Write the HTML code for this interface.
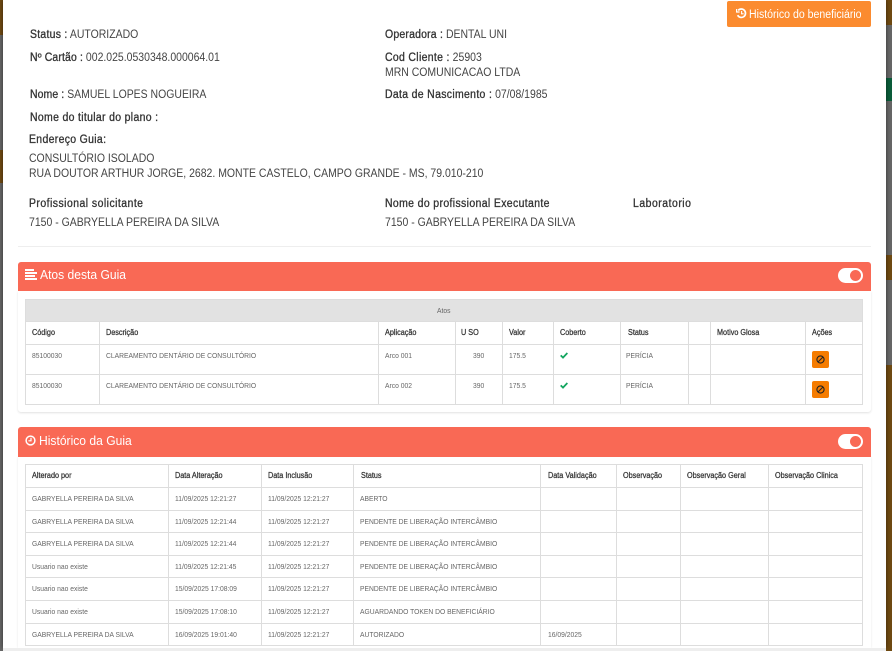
<!DOCTYPE html>
<html lang="pt-BR"><head><meta charset="utf-8"><title>Guia</title>
<style>
html,body{margin:0;padding:0;width:892px;height:651px;overflow:hidden;background:#666;font-family:"Liberation Sans",Arial,sans-serif}
#p{position:relative;width:892px;height:651px;overflow:hidden}
#p div,#p span,#p svg{position:absolute}
.b{background:#6f4a12}
#m{left:3px;top:0;width:883px;height:648px;background:#fff;box-shadow:0 0 4px rgba(0,0,0,.5)}
.t{font-size:11.5px;line-height:14px;color:#444;white-space:nowrap;transform:translateY(1px) scaleX(.91);transform-origin:0 50%}
.t b{font-weight:400;color:#333;-webkit-text-stroke:.3px #333;letter-spacing:.36px}
.c{font-size:7.5px;line-height:10px;color:#666;white-space:nowrap;transform:scaleX(.9);transform-origin:0 50%}
.h{font-size:7.8px;line-height:10px;color:#333;white-space:nowrap;-webkit-text-stroke:.25px #333;transform:scaleX(.93);transform-origin:0 50%}
.l{background:#ddd}
.hd{background:#f96955;left:18px;width:853px;border-radius:3px 3px 0 0}
.ti{color:#fff;font-size:12.6px;line-height:16px;white-space:nowrap;transform:scaleX(.96);transform-origin:0 50%}
.sw{width:25px;height:15px;border-radius:8px;background:#fff}
.sw i{position:absolute;right:2px;top:2px;width:11px;height:11px;border-radius:50%;background:#f96955;display:block}
.ab{width:17px;height:17px;left:812px;background:#f57c00;border-radius:2px}
</style></head><body><div id="p">
<div class="b" style="left:0;top:0;width:3px;height:35px"></div>
<div class="b" style="left:0;top:150px;width:3px;height:33px"></div>
<div class="b" style="left:886px;top:0;width:6px;height:25px"></div>
<div style="left:886px;top:78px;width:6px;height:23px;background:#0b5c3a"></div>
<div class="b" style="left:886px;top:255px;width:6px;height:25px"></div>
<div class="b" style="left:886px;top:365px;width:6px;height:286px"></div>
<div id="m"></div>

<div style="left:727px;top:1px;width:144px;height:26px;background:#fb8b2f;border-radius:2px"></div>
<svg style="left:736px;top:8px" width="11" height="11" viewBox="0 0 11 11" fill="none" stroke="#fff" stroke-width="1.7"><path d="M2.2 2.4A4.2 4.2 0 1 1 1.6 7.2"/><path d="M.6 1v3h3" stroke-width="1.2"/><path d="M5.6 3v2.8h2" stroke-width="1.1"/></svg>
<span class="t" style="left:749px;top:7px;color:#fff;transform:translateY(1px) scaleX(.917)">Histórico do beneficiário</span>

<span class="t" style="left:30px;top:27px"><b style="letter-spacing:.28px">Status :</b> AUTORIZADO</span>
<span class="t" style="left:385px;top:27px"><b style="letter-spacing:.22px">Operadora :</b> DENTAL UNI</span>
<span class="t" style="left:30px;top:50px"><b style="letter-spacing:.15px">Nº Cartão :</b> 002.025.0530348.000064.01</span>
<span class="t" style="left:385px;top:50px"><b>Cod Cliente :</b> 25903</span>
<span class="t" style="left:385px;top:65px">MRN COMUNICACAO LTDA</span>
<span class="t" style="left:30px;top:87px"><b style="letter-spacing:.1px">Nome :</b> SAMUEL LOPES NOGUEIRA</span>
<span class="t" style="left:385px;top:87px"><b>Data de Nascimento :</b> 07/08/1985</span>
<span class="t" style="left:30px;top:110px"><b>Nome do titular do plano :</b></span>
<span class="t" style="left:29px;top:132px"><b>Endereço Guia:</b></span>
<span class="t" style="left:29px;top:151px">CONSULTÓRIO ISOLADO</span>
<span class="t" style="left:29px;top:166px">RUA DOUTOR ARTHUR JORGE, 2682. MONTE CASTELO, CAMPO GRANDE - MS, 79.010-210</span>
<span class="t" style="left:29px;top:196px"><b style="letter-spacing:.5px">Profissional solicitante</b></span>
<span class="t" style="left:385px;top:196px"><b style="letter-spacing:.4px">Nome do profissional Executante</b></span>
<span class="t" style="left:633px;top:196px"><b style="letter-spacing:.55px">Laboratorio</b></span>
<span class="t" style="left:29px;top:215px">7150 - GABRYELLA PEREIRA DA SILVA</span>
<span class="t" style="left:385px;top:215px">7150 - GABRYELLA PEREIRA DA SILVA</span>
<div style="left:18px;top:246px;width:853px;height:1px;background:#eee"></div>

<!-- Atos card -->
<div style="left:18px;top:291px;width:853px;height:121px;box-shadow:0 1px 2px rgba(0,0,0,.12);border-radius:0 0 3px 3px"></div>
<div class="hd" style="top:262px;height:29px"></div>
<svg style="left:25px;top:269px" width="12" height="11" viewBox="0 0 12 11" fill="#fff"><rect x="0" y="0" width="9" height="2"/><rect x="0" y="3" width="12" height="2"/><rect x="0" y="6" width="10" height="2"/><rect x="0" y="9" width="12" height="2"/></svg>
<span class="ti" style="left:40px;top:267px">Atos desta Guia</span>
<div class="sw" style="left:838px;top:268px"><i></i></div>

<div style="left:25px;top:299px;width:838px;height:23px;background:#e2e2e2"></div>
<span class="c" style="left:437px;top:306px">Atos</span>
<div class="l" style="left:25px;top:299px;width:838px;height:1px"></div>
<div class="l" style="left:25px;top:321px;width:838px;height:1px"></div>
<div class="l" style="left:25px;top:344px;width:838px;height:1px"></div>
<div class="l" style="left:25px;top:374px;width:838px;height:1px"></div>
<div class="l" style="left:25px;top:404px;width:838px;height:1px"></div>
<div class="l" style="left:25px;top:299px;width:1px;height:106px"></div>
<div class="l" style="left:862px;top:299px;width:1px;height:106px"></div>
<div class="l" style="left:99px;top:322px;width:1px;height:83px"></div>
<div class="l" style="left:378px;top:322px;width:1px;height:83px"></div>
<div class="l" style="left:455px;top:322px;width:1px;height:83px"></div>
<div class="l" style="left:502px;top:322px;width:1px;height:83px"></div>
<div class="l" style="left:553px;top:322px;width:1px;height:83px"></div>
<div class="l" style="left:620px;top:322px;width:1px;height:83px"></div>
<div class="l" style="left:688px;top:322px;width:1px;height:83px"></div>
<div class="l" style="left:710px;top:322px;width:1px;height:83px"></div>
<div class="l" style="left:805px;top:322px;width:1px;height:83px"></div>

<span class="h" style="left:32px;top:328px">Código</span>
<span class="h" style="left:106px;top:328px">Descrição</span>
<span class="h" style="left:385px;top:328px">Aplicação</span>
<span class="h" style="left:461px;top:328px">U SO</span>
<span class="h" style="left:509px;top:328px">Valor</span>
<span class="h" style="left:560px;top:328px">Coberto</span>
<span class="h" style="left:628px;top:328px">Status</span>
<span class="h" style="left:717px;top:328px">Motivo Glosa</span>
<span class="h" style="left:812px;top:328px">Ações</span>

<span class="c" style="left:32px;top:351px">85100030</span>
<span class="c" style="left:106px;top:351px">CLAREAMENTO DENTÁRIO DE CONSULTÓRIO</span>
<span class="c" style="left:385px;top:351px">Arco 001</span>
<span class="c" style="left:473px;top:351px">390</span>
<span class="c" style="left:509px;top:351px">175.5</span>
<svg style="left:560px;top:352px" width="8" height="7" viewBox="0 0 8 7" fill="none" stroke="#12a55f" stroke-width="1.8"><path d="M.7 3.4L3 5.6 7.4 1"/></svg>
<span class="c" style="left:626px;top:351px">PERÍCIA</span>
<div class="ab" style="top:351px"></div>
<svg style="left:816px;top:355px" width="9" height="9" viewBox="0 0 9 9" fill="none" stroke="#222" stroke-width="1.1"><circle cx="4.5" cy="4.5" r="3.6"/><path d="M2 7L7 2"/></svg>

<span class="c" style="left:32px;top:381px">85100030</span>
<span class="c" style="left:106px;top:381px">CLAREAMENTO DENTÁRIO DE CONSULTÓRIO</span>
<span class="c" style="left:385px;top:381px">Arco 002</span>
<span class="c" style="left:473px;top:381px">390</span>
<span class="c" style="left:509px;top:381px">175.5</span>
<svg style="left:560px;top:382px" width="8" height="7" viewBox="0 0 8 7" fill="none" stroke="#12a55f" stroke-width="1.8"><path d="M.7 3.4L3 5.6 7.4 1"/></svg>
<span class="c" style="left:626px;top:381px">PERÍCIA</span>
<div class="ab" style="top:381px"></div>
<svg style="left:816px;top:385px" width="9" height="9" viewBox="0 0 9 9" fill="none" stroke="#222" stroke-width="1.1"><circle cx="4.5" cy="4.5" r="3.6"/><path d="M2 7L7 2"/></svg>

<!-- Historico card -->
<div style="left:18px;top:457px;width:853px;height:191px;box-shadow:0 0 2px rgba(0,0,0,.1)"></div>
<div class="hd" style="top:427px;height:30px"></div>
<svg style="left:25px;top:435px" width="11" height="11" viewBox="0 0 11 11" fill="none" stroke="#fff"><circle cx="5.5" cy="5.5" r="4.4" stroke-width="1.5"/><path d="M6 2.8v3H3.4" stroke-width="1.2"/></svg>
<span class="ti" style="left:39px;top:433px">Histórico da Guia</span>
<div class="sw" style="left:838px;top:434px"><i></i></div>

<div class="l" style="left:25px;top:464px;width:838px;height:1px"></div>
<div class="l" style="left:25px;top:487px;width:838px;height:1px"></div>
<div class="l" style="left:25px;top:510px;width:838px;height:1px"></div>
<div class="l" style="left:25px;top:532px;width:838px;height:1px"></div>
<div class="l" style="left:25px;top:555px;width:838px;height:1px"></div>
<div class="l" style="left:25px;top:577px;width:838px;height:1px"></div>
<div class="l" style="left:25px;top:600px;width:838px;height:1px"></div>
<div class="l" style="left:25px;top:623px;width:838px;height:1px"></div>
<div class="l" style="left:25px;top:645px;width:838px;height:1px"></div>
<div class="l" style="left:25px;top:464px;width:1px;height:182px"></div>
<div class="l" style="left:168px;top:464px;width:1px;height:182px"></div>
<div class="l" style="left:261px;top:464px;width:1px;height:182px"></div>
<div class="l" style="left:353px;top:464px;width:1px;height:182px"></div>
<div class="l" style="left:540px;top:464px;width:1px;height:182px"></div>
<div class="l" style="left:616px;top:464px;width:1px;height:182px"></div>
<div class="l" style="left:680px;top:464px;width:1px;height:182px"></div>
<div class="l" style="left:768px;top:464px;width:1px;height:182px"></div>
<div class="l" style="left:862px;top:464px;width:1px;height:182px"></div>

<span class="h" style="left:32px;top:471px">Alterado por</span>
<span class="h" style="left:175px;top:471px">Data Alteração</span>
<span class="h" style="left:268px;top:471px">Data Inclusão</span>
<span class="h" style="left:361px;top:471px">Status</span>
<span class="h" style="left:548px;top:471px">Data Validação</span>
<span class="h" style="left:623px;top:471px">Observação</span>
<span class="h" style="left:687px;top:471px">Observação Geral</span>
<span class="h" style="left:775px;top:471px">Observação Clinica</span>

<span class="c" style="left:32px;top:494px">GABRYELLA PEREIRA DA SILVA</span><span class="c" style="left:175px;top:494px">11/09/2025 12:21:27</span><span class="c" style="left:268px;top:494px">11/09/2025 12:21:27</span><span class="c" style="left:360px;top:494px">ABERTO</span>
<span class="c" style="left:32px;top:517px">GABRYELLA PEREIRA DA SILVA</span><span class="c" style="left:175px;top:517px">11/09/2025 12:21:44</span><span class="c" style="left:268px;top:517px">11/09/2025 12:21:27</span><span class="c" style="left:360px;top:517px">PENDENTE DE LIBERAÇÃO INTERCÂMBIO</span>
<span class="c" style="left:32px;top:539px">GABRYELLA PEREIRA DA SILVA</span><span class="c" style="left:175px;top:539px">11/09/2025 12:21:44</span><span class="c" style="left:268px;top:539px">11/09/2025 12:21:27</span><span class="c" style="left:360px;top:539px">PENDENTE DE LIBERAÇÃO INTERCÂMBIO</span>
<span class="c" style="left:32px;top:562px">Usuario nao existe</span><span class="c" style="left:175px;top:562px">11/09/2025 12:21:45</span><span class="c" style="left:268px;top:562px">11/09/2025 12:21:27</span><span class="c" style="left:360px;top:562px">PENDENTE DE LIBERAÇÃO INTERCÂMBIO</span>
<span class="c" style="left:32px;top:584px">Usuario nao existe</span><span class="c" style="left:175px;top:584px">15/09/2025 17:08:09</span><span class="c" style="left:268px;top:584px">11/09/2025 12:21:27</span><span class="c" style="left:360px;top:584px">PENDENTE DE LIBERAÇÃO INTERCÂMBIO</span>
<span class="c" style="left:32px;top:607px">Usuario nao existe</span><span class="c" style="left:175px;top:607px">15/09/2025 17:08:10</span><span class="c" style="left:268px;top:607px">11/09/2025 12:21:27</span><span class="c" style="left:360px;top:607px">AGUARDANDO TOKEN DO BENEFICIÁRIO</span>
<span class="c" style="left:32px;top:630px">GABRYELLA PEREIRA DA SILVA</span><span class="c" style="left:175px;top:630px">16/09/2025 19:01:40</span><span class="c" style="left:268px;top:630px">11/09/2025 12:21:27</span><span class="c" style="left:360px;top:630px">AUTORIZADO</span><span class="c" style="left:548px;top:630px">16/09/2025</span>
<div style="left:3px;top:648px;width:883px;height:3px;background:#eee"></div>
</div></body></html>
